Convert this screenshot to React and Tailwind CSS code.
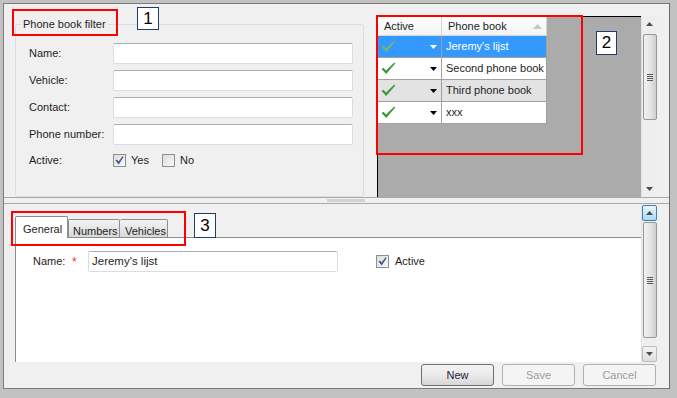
import React from 'react';

const rows = [
  { name: "Jeremy's lijst", selected: true },
  { name: 'Second phone book' },
  { name: 'Third phone book', alt: true },
  { name: 'xxx' },
];

function GreenCheck({ light }) {
  return (
    <svg width="15" height="13" viewBox="0 0 15 13">
      <path
        d="M0.5 7 L2.5 5.8 L5 8.6 L13.3 0.6 L14.3 1.4 L5.2 12 Z"
        fill={light ? '#6fb86f' : '#3f9a3f'}
      />
    </svg>
  );
}

function DropArrow({ white }) {
  return (
    <svg width="7" height="4" viewBox="0 0 7 4">
      <path d="M0 0 H7 L3.5 4 Z" fill={white ? '#ffffff' : '#000000'} />
    </svg>
  );
}

function CheckBox({ checked }) {
  return (
    <span className="w-[13px] h-[13px] border border-[#8e8f8f] bg-gradient-to-br from-[#dcdcdc] to-[#f8f8f8] flex items-center justify-center shrink-0">
      {checked && (
        <svg width="9" height="9" viewBox="0 0 9 9">
          <path d="M0.5 4.5 L2 3.6 L3.6 5.6 L7.6 0.3 L8.6 1 L3.7 8.4 Z" fill="#3d5593" />
        </svg>
      )}
    </span>
  );
}

function TextBox({ value, className }) {
  return (
    <div
      className={
        'h-[21px] bg-white border border-[#d9dee4] border-t-[#acaeb3] rounded-[2px] flex items-center pl-[3px] whitespace-nowrap ' +
        (className || '')
      }
    >
      {value}
    </div>
  );
}

function ScrollBar({ className, thumbTop, thumbHeight, hotUp }) {
  return (
    <div className={'w-[16px] bg-[#eeeeee] border-l border-[#e2e2e2] flex flex-col items-center ' + (className || '')}>
      <div
        className={
          'w-[15px] h-[16px] flex items-center justify-center shrink-0 ' +
          (hotUp ? 'border border-[#3c7fb1] bg-gradient-to-b from-[#eaf6fd] to-[#a7d9f5] rounded-[2px]' : '')
        }
      >
        <svg width="7" height="4" viewBox="0 0 7 4">
          <path d="M0 4 L3.5 0 L7 4 Z" fill="#4d4d4d" />
        </svg>
      </div>
      <div className="flex-1 w-full relative">
        <div
          className="absolute left-[1px] w-[14px] rounded-[2px] border border-[#979797] bg-gradient-to-r from-[#f1f1f1] via-[#e6e6e6] to-[#cfcfcf] flex flex-col items-center justify-center gap-[1px]"
          style={{ top: thumbTop, height: thumbHeight }}
        >
          <span className="w-[6px] h-px bg-[#5a5a5a]" />
          <span className="w-[6px] h-px bg-[#5a5a5a]" />
          <span className="w-[6px] h-px bg-[#5a5a5a]" />
          <span className="w-[6px] h-px bg-[#5a5a5a]" />
        </div>
      </div>
      <div
        className={
          'w-[15px] h-[16px] flex items-center justify-center shrink-0 ' +
          (hotUp ? 'border border-[#bcbcbc] bg-gradient-to-b from-[#f4f4f4] to-[#dedede] rounded-[2px]' : '')
        }
      >
        <svg width="7" height="4" viewBox="0 0 7 4">
          <path d="M0 0 H7 L3.5 4 Z" fill="#4d4d4d" />
        </svg>
      </div>
    </div>
  );
}

function Button({ label, disabled }) {
  return (
    <button
      type="button"
      className={
        'w-[73px] h-[22px] rounded-[3px] border flex items-center justify-center ' +
        (disabled
          ? 'border-[#adb2b5] bg-[#f4f4f4] text-[#9c9c9c]'
          : 'border-[#707070] bg-gradient-to-b from-[#f2f2f2] via-[#ebebeb] to-[#d6d6d6] text-[#1a1a3a]')
      }
    >
      {label}
    </button>
  );
}

export default function App() {
  return (
    <div className="w-[677px] h-[398px] bg-[#c2c2c2] pt-[3px] pl-[3px] pr-[7px] pb-[9px] relative font-['Liberation_Sans',Arial,sans-serif] text-[11px] text-[#1e1e1e]">
      <div className="h-full flex flex-col bg-[#f0f0f0] border border-[#7a7a7a] border-r-[#6e6e6e]">
        {/* top: filter + grid */}
        <div className="h-[194px] flex border-b border-[#a9a9a9] shrink-0">
          <fieldset className="ml-[11px] mt-[14px] w-[349px] h-[179px] border border-[#d5dfe5] rounded-[3px]">
            <legend className="ml-[5px] px-[2px] leading-[13px]">Phone book filter</legend>
            <div className="flex flex-col pl-[13px] pt-[12px] pr-[10px] gap-[6px]">
              {['Name:', 'Vehicle:', 'Contact:', 'Phone number:'].map((l) => (
                <div key={l} className="flex items-center">
                  <span className="w-[84px]">{l}</span>
                  <TextBox className="w-[240px]" />
                </div>
              ))}
              <div className="flex items-center mt-[1px]">
                <span className="w-[84px]">Active:</span>
                <CheckBox checked />
                <span className="ml-[5px] w-[31px]">Yes</span>
                <CheckBox />
                <span className="ml-[5px]">No</span>
              </div>
            </div>
          </fieldset>

          <div className="ml-[13px] mt-[12px] w-[264px] h-[181px] bg-[#ababab] border-l border-t border-black">
            <div className="w-[169px] bg-white">
              <div className="flex h-[19px] border-b border-[#d5d5d5] bg-gradient-to-b from-white to-[#f2f3f5]">
                <div className="w-[64px] border-r border-[#d5d5d5] pl-[6px] flex items-center">Active</div>
                <div className="w-[105px] border-r border-[#d5d5d5] pl-[6px] flex items-center justify-between pr-[4px]">
                  <span>Phone book</span>
                  <svg width="9" height="5" viewBox="0 0 9 5">
                    <path d="M0 5 L4.5 0 L9 5 Z" fill="#c6c6c6" />
                  </svg>
                </div>
              </div>
              {rows.map((r) => (
                <div
                  key={r.name}
                  className={
                    'flex h-[22px] border-b border-[#a0a0a0] ' +
                    (r.selected ? 'bg-[#3399ff] text-white' : r.alt ? 'bg-[#e3e3e3]' : 'bg-white')
                  }
                >
                  <div className="w-[64px] border-r border-[#a0a0a0] pl-[3px] pr-[4px] flex items-center justify-between">
                    <GreenCheck light={r.selected} />
                    <DropArrow white={r.selected} />
                  </div>
                  <div className="w-[105px] border-r border-[#a0a0a0] pl-[4px] flex items-center whitespace-nowrap text-[11px]">
                    {r.name}
                  </div>
                </div>
              ))}
            </div>
          </div>
          <ScrollBar className="mt-[12px] h-[181px]" thumbTop={2} thumbHeight={86} />
        </div>

        {/* splitter */}
        <div className="h-[5px] shrink-0 flex justify-center items-center">
          <div className="ml-[19px] w-[38px] h-[3px] bg-[#d2d2d2]" />
        </div>

        {/* bottom: details */}
        <div className="flex-1 flex flex-col border-t border-[#a9a9a9]">
          <div className="h-[158px] flex">
            <div className="ml-[11px] w-[626px] flex flex-col">
              <div className="h-[33px] flex items-end">
                <div className="relative z-10 -mb-px w-[53px] h-[22px] bg-white border border-b-0 border-[#898c95] rounded-t-[2px] pl-[7px] pt-[4px]">
                  General
                </div>
                <div className="w-[52px] h-[18px] border border-b-0 border-[#8c8e94] bg-gradient-to-b from-[#f3f3f3] to-[#d9d9d9] pl-[4px] pt-[3px] rounded-t-[2px] whitespace-nowrap">
                  Numbers
                </div>
                <div className="w-[48px] h-[18px] border border-b-0 border-l-0 border-[#8c8e94] bg-gradient-to-b from-[#f3f3f3] to-[#d9d9d9] pl-[5px] pt-[3px] rounded-t-[2px] whitespace-nowrap">
                  Vehicles
                </div>
              </div>
              <div className="flex-1 bg-white border-l border-t border-[#898c95]">
                <div className="flex items-center mt-[13px] pl-[17px]">
                  <span className="w-[39px]">Name:</span>
                  <span className="w-[16px] text-[#ff2a2a] text-[12px] leading-none">*</span>
                  <TextBox className="w-[250px] text-[11.5px]" value="Jeremy's lijst" />
                  <span className="ml-[38px]">
                    <CheckBox checked />
                  </span>
                  <span className="ml-[6px]">Active</span>
                </div>
              </div>
            </div>
            <ScrollBar className="mt-[1px] h-[157px]" thumbTop={1} thumbHeight={116} hotUp />
          </div>
          <div className="flex-1 flex justify-end items-start pt-[2px] pr-[13px] gap-[8px]">
            <Button label="New" />
            <Button label="Save" disabled />
            <Button label="Cancel" disabled />
          </div>
        </div>
      </div>

      {/* annotations */}
      <div className="absolute left-[12px] top-[9px] w-[106px] h-[27px] border-2 border-[#ff0000]" />
      <div className="absolute left-[137px] top-[7px] w-[22px] h-[23px] border border-[#1f3b6f] bg-white flex items-center justify-center text-[17px] text-black">1</div>
      <div className="absolute left-[376px] top-[15px] w-[207px] h-[140px] border-2 border-[#ff0000]" />
      <div className="absolute left-[596px] top-[31px] w-[21px] h-[24px] border border-[#1f3b6f] bg-white flex items-center justify-center text-[17px] text-black">2</div>
      <div className="absolute left-[11px] top-[211px] w-[175px] h-[35px] border-2 border-[#ff0000]" />
      <div className="absolute left-[194px] top-[213px] w-[22px] h-[25px] border border-[#1f3b6f] bg-white flex items-center justify-center text-[17px] text-black">3</div>
    </div>
  );
}
